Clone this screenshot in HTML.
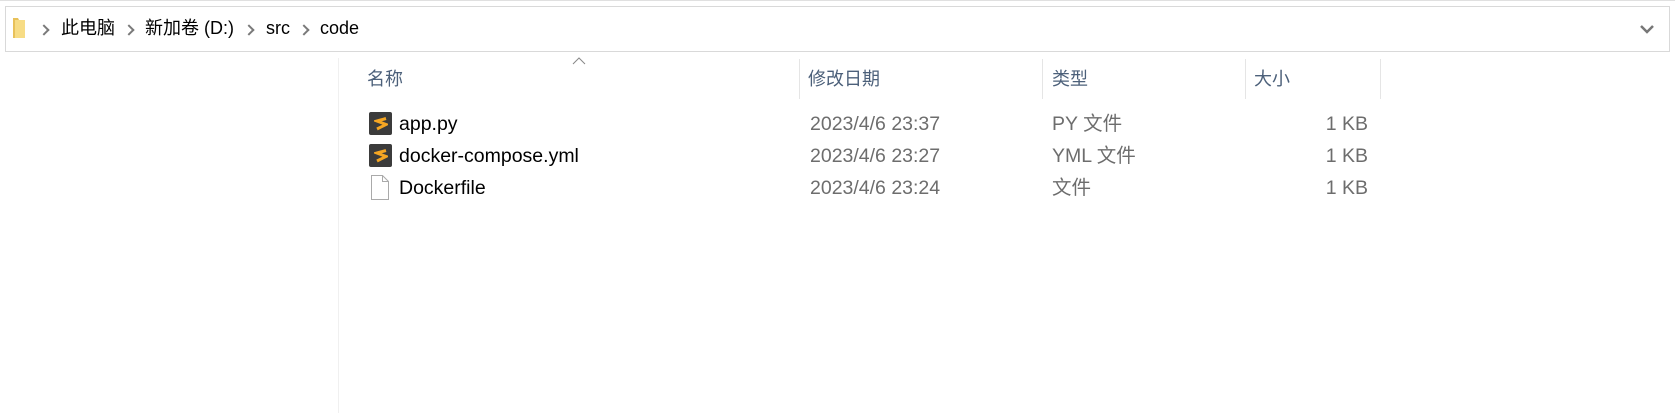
<!DOCTYPE html>
<html><head><meta charset="utf-8"><style>
body{margin:0;width:1675px;height:413px;background:#fff;position:relative;overflow:hidden;font-family:"Liberation Sans","Noto Sans CJK SC",sans-serif;}
.a{position:absolute;white-space:nowrap;line-height:22px}
.bar{position:absolute;left:5px;top:6px;width:1665px;height:46px;border:1px solid #d9d9d9;box-sizing:border-box}
.sep{position:absolute;top:59px;height:40px;width:1px;background:#e5e5e5}
.h{font-size:18px;color:#4c607a;top:68px}
.n{font-size:18px;color:#000}
.r{font-size:19.5px;color:#000}
.g{font-size:19.5px;color:#6d6d6d}
.chev{position:absolute;width:6px;height:6px;border-right:2px solid #7a7a7a;border-top:2px solid #7a7a7a;transform:rotate(45deg)}
.ic{position:absolute;left:369px;width:23px;height:23px;background:#3b3b3b;border-radius:2px}
</style></head><body>
<div class="a" style="left:0;top:0;width:1675px;height:1px;background:#e0e0e0"></div>
<div class="bar"></div>
<svg class="a" style="left:12px;top:17px" width="15" height="22"><path d="M1 1h5l1 2v18H1z" fill="#e8c15a"/><path d="M3 3h10v18H3z" fill="#f7dc85"/></svg>
<div class="chev" style="left:40px;top:26px"></div>
<div class="a n" style="left:61px;top:17px">此电脑</div>
<div class="chev" style="left:125px;top:26px"></div>
<div class="a n" style="left:145px;top:17px">新加卷 (D:)</div>
<div class="chev" style="left:245px;top:26px"></div>
<div class="a n" style="left:266px;top:17px">src</div>
<div class="chev" style="left:300px;top:26px"></div>
<div class="a n" style="left:320px;top:17px">code</div>
<svg class="a" style="left:1639px;top:23px" width="16" height="12"><path d="M2 3l6 6 6-6" stroke="#777" stroke-width="2.5" fill="none"/></svg>
<div class="a" style="left:338px;top:58px;width:1px;height:355px;background:#f0f0f0"></div>
<svg class="a" style="left:572px;top:57px" width="14" height="8"><path d="M1 7l6-6 6 6" stroke="#888" stroke-width="1" fill="none"/></svg>
<div class="sep" style="left:799px"></div><div class="sep" style="left:1042px"></div><div class="sep" style="left:1245px"></div><div class="sep" style="left:1380px"></div>
<div class="a h" style="left:367px">名称</div>
<div class="a h" style="left:808px">修改日期</div>
<div class="a h" style="left:1052px">类型</div>
<div class="a h" style="left:1254px">大小</div>
<div class="ic" style="top:112px"></div><svg class="a" style="left:374px;top:117px" width="14" height="14"><path d="M12 1.5L3 4l9 3.5-9 4.5" stroke="#f5a623" stroke-width="3" fill="none"/></svg>
<div class="ic" style="top:144px"></div><svg class="a" style="left:374px;top:149px" width="14" height="14"><path d="M12 1.5L3 4l9 3.5-9 4.5" stroke="#f5a623" stroke-width="3" fill="none"/></svg>
<svg class="a" style="left:370px;top:175px" width="20" height="25"><path d="M1.5 .5h11l6 6v18h-17z" fill="#fff" stroke="#aaa"/><path d="M12.5 .5v6h6" fill="none" stroke="#aaa"/></svg>
<div class="a r" style="left:399px;top:113px">app.py</div>
<div class="a r" style="left:399px;top:145px">docker-compose.yml</div>
<div class="a r" style="left:399px;top:177px">Dockerfile</div>
<div class="a g" style="left:810px;top:113px">2023/4/6 23:37</div>
<div class="a g" style="left:810px;top:145px">2023/4/6 23:27</div>
<div class="a g" style="left:810px;top:177px">2023/4/6 23:24</div>
<div class="a g" style="left:1052px;top:113px">PY 文件</div>
<div class="a g" style="left:1052px;top:145px">YML 文件</div>
<div class="a g" style="left:1052px;top:177px">文件</div>
<div class="a g" style="right:307px;top:113px">1 KB</div>
<div class="a g" style="right:307px;top:145px">1 KB</div>
<div class="a g" style="right:307px;top:177px">1 KB</div>
</body></html>
